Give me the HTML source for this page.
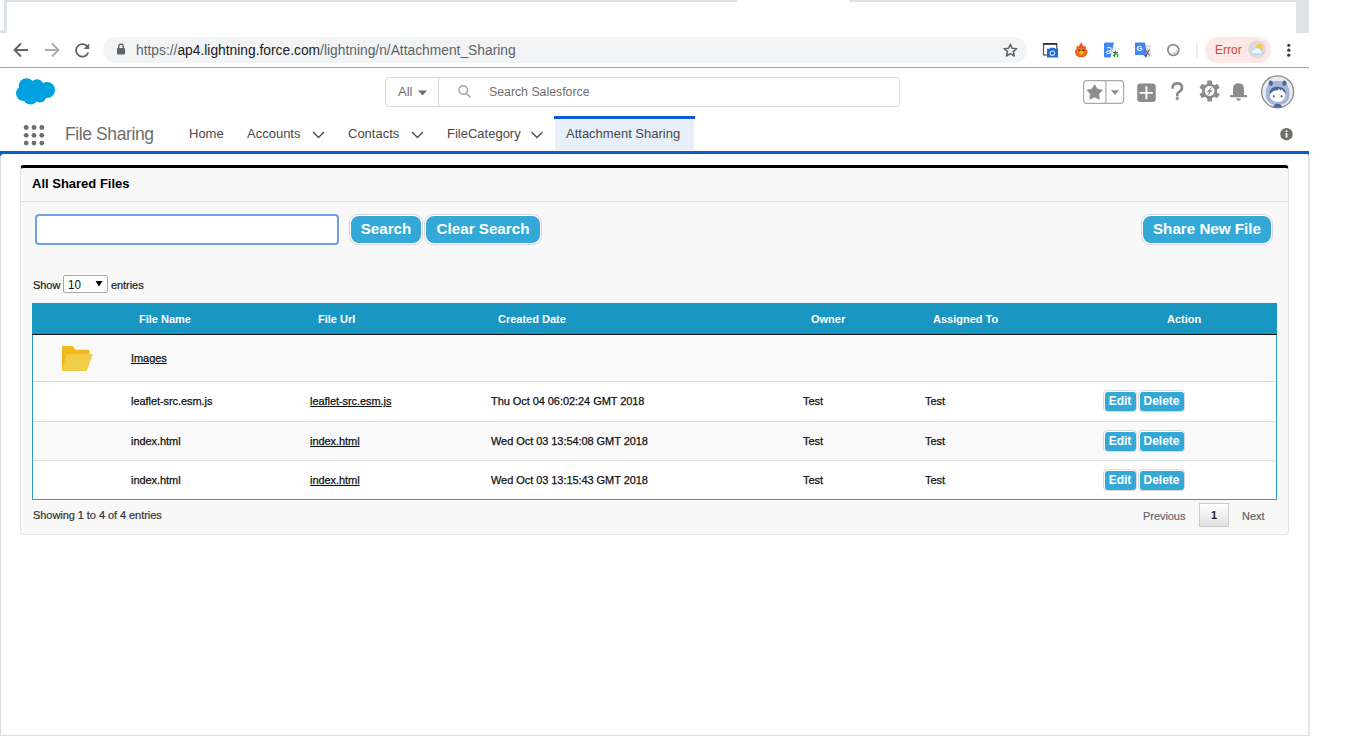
<!DOCTYPE html>
<html><head><meta charset="utf-8">
<style>
*{margin:0;padding:0;box-sizing:border-box}
html,body{width:1366px;height:736px;overflow:hidden;background:#fff;font-family:"Liberation Sans",sans-serif}
.abs{position:absolute}
svg{position:absolute;overflow:visible}
#topstrip{left:0;top:0;width:1309px;height:2px;background:#dde0e6}
#tab{left:737px;top:0;width:113px;height:2px;background:#fff;border-radius:3px 3px 0 0}
#lbox{left:0;top:0;width:7px;height:33px;border-right:3px solid #dde1e8;border-bottom:3px solid #dde1e8;background:#fff}
#rbox{left:1296px;top:0;width:13px;height:33px;background:#dee1e6}
#sep{left:0;top:67px;width:1309px;height:1px;background:#a0a0a0}
#url{left:103px;top:37px;width:924px;height:26px;border-radius:13px;background:#f1f3f4}
#urltext{left:136px;top:43px;font-size:13.8px;color:#5f6368;white-space:nowrap}
#urltext b{font-weight:normal;color:#202124}
#errpill{left:1205px;top:37px;width:66px;height:26px;border-radius:13px;background:#fce8e6}
#errtext{left:1215px;top:43px;font-size:12px;color:#d4452f}
#search{left:385px;top:77px;width:515px;height:30px;border:1px solid #dddbda;border-radius:4px;background:#fff}
#searchdiv{left:438px;top:78px;width:1px;height:28px;background:#dddbda}
.nav{font-size:13px;color:#4a4846;white-space:nowrap;top:126px}
#activetab{left:555px;top:119px;width:139px;height:31px;background:#e6effa}
#activetop{left:554px;top:116px;width:141px;height:3px;background:#0b5cd0}
#bluebar{left:0;top:151px;width:1309px;height:3px;background:#0b5cd0}
#content{left:0;top:154px;width:1310px;height:582px;border-left:1px solid #dadada;border-right:2px solid #e6e6e6;border-bottom:1px solid #dedede;background:#fff;border-top-left-radius:4px;border-top-right-radius:4px}
#card{left:20px;top:165px;width:1269px;height:370px;background:#f8f8f8;border:1px solid #e3e3e3;border-top:3px solid #000;border-radius:4px}
#cardsep{left:21px;top:201px;width:1267px;height:1px;background:#e0e0e0}
#cardtitle{left:32px;top:176px;font-size:13px;font-weight:bold;color:#000}
#inp{left:35px;top:214px;width:304px;height:31px;border:2px solid #72a0e8;border-radius:4px;background:#fff}
.btn{height:31px;border:1px solid #d8d8d8;border-radius:9px;background:#fff;padding:1px}
.btn div{width:100%;height:100%;background:#34a9d8;border-radius:8px;color:#fff;font-weight:bold;font-size:15.2px;text-align:center;line-height:25px;white-space:nowrap}
.sm{font-size:11px;color:#222;white-space:nowrap;-webkit-text-stroke:0.2px currentColor;letter-spacing:-0.06px}
#sel{left:63px;top:275px;width:45px;height:18px;border:1px solid #a9a9a9;border-radius:2px;background:#fff}
#thead{left:32px;top:303px;width:1245px;height:32px;background:#1a96c2;border-bottom:1px solid #111}
.th{font-size:11px;font-weight:bold;color:#fff;top:313px;white-space:nowrap}
#tbody{left:32px;top:335px;width:1245px;height:165px;border-left:1px solid #2a9fca;border-right:1px solid #2a9fca;border-bottom:1px solid #2a9fca;background:#fff}
.row{left:33px;width:1243px;border-top:1px solid #dddddd}
.td{font-size:11px;color:#111;white-space:nowrap;-webkit-text-stroke:0.25px #111;letter-spacing:-0.06px}
.td.u{text-decoration:underline}
.ebtn{height:22px;border:1px solid #d9d9d9;border-radius:4px;background:#fff;padding:0.5px}
.ebtn div{width:100%;height:100%;background:#34a9d8;border-radius:3px;color:#fff;font-weight:bold;font-size:12px;text-align:center;line-height:19px}
#pg1{left:1199px;top:503px;width:30px;height:24px;border:1.5px solid #cbcbcb;border-radius:0;background:linear-gradient(#fff,#e0e0e0);font-size:11px;font-weight:bold;color:#222;text-align:center;line-height:22px}
</style></head><body>
<!-- browser chrome -->
<div id="topstrip" class="abs"></div>
<div id="tab" class="abs"></div>
<div id="lbox" class="abs"></div>
<div id="rbox" class="abs"></div>
<svg style="left:0;top:0" width="30" height="68">
 <path d="M28 50H15M21 43.5L14.5 50L21 56.5" fill="none" stroke="#5f6368" stroke-width="1.8"/>
</svg>
<svg style="left:0;top:0" width="60" height="68">
 <path d="M45 50H58M52 43.5L58.5 50L52 56.5" fill="none" stroke="#a8abaf" stroke-width="1.8"/>
</svg>
<svg style="left:0;top:0" width="92" height="68">
 <path d="M88 47.5A6.3 6.3 0 1 0 88.3 52.5" fill="none" stroke="#5f6368" stroke-width="1.8"/>
 <path d="M89.2 43.5V49H83.7Z" fill="#5f6368"/>
</svg>
<div id="url" class="abs"></div>
<svg style="left:0;top:0" width="130" height="68">
 <rect x="117" y="48" width="8" height="6.5" rx="0.8" fill="#5f6368"/>
 <path d="M118.8 48.5V46.5A2.2 2.2 0 0 1 123.2 46.5V48.5" fill="none" stroke="#5f6368" stroke-width="1.4"/>
</svg>
<div id="urltext" class="abs">https://<b>ap4.lightning.force.com</b>/lightning/n/Attachment_Sharing</div>
<svg style="left:0;top:0" width="1020" height="68">
 <path d="M1010.4 44.2L1012.2 48.3L1016.7 48.7L1013.3 51.6L1014.3 56L1010.4 53.7L1006.5 56L1007.5 51.6L1004.1 48.7L1008.6 48.3Z" fill="none" stroke="#5f6368" stroke-width="1.5" stroke-linejoin="round"/>
</svg>
<!-- extension icons -->
<svg style="left:0;top:0" width="1300" height="68">
 <rect x="1043.5" y="43.8" width="13.2" height="11.2" fill="none" stroke="#555" stroke-width="1.2"/>
 <rect x="1043" y="43" width="14.2" height="1.8" fill="#333"/>
 <path d="M1047 48.8H1049.5L1050.5 47.8H1054.5L1055.5 48.8H1058V57.5H1047Z" fill="#1a6ed8"/>
 <circle cx="1052.4" cy="53.2" r="2.2" fill="none" stroke="#dfe9fb" stroke-width="1.1"/>
 <circle cx="1052.4" cy="53.2" r="0.9" fill="#1a4fb0"/>
 <path d="M1081.2 42.3L1083.5 46.5L1085.8 45.8L1085.6 48.5Q1087.8 50.5 1087.2 53Q1086.3 57.2 1081.2 57.2Q1076 57.2 1075.2 53Q1074.6 50.5 1076.7 48.5L1076.5 45.8L1078.8 46.5Z" fill="#f0501e"/>
 <ellipse cx="1081.2" cy="52" rx="4.6" ry="4.3" fill="#f07b1c"/>
 <path d="M1078.6 51.3L1083.8 51.3L1081.2 55.2Z" fill="#f6c21c"/>
 <circle cx="1079.5" cy="50.3" r="0.9" fill="#222"/><circle cx="1083.3" cy="50.3" r="0.9" fill="#222"/>
 <path d="M1105.5 42.5H1114L1110.5 57.5H1105.5Q1104 57.5 1104 56V44Q1104 42.5 1105.5 42.5Z" fill="#4285f4"/>
 <path d="M1109.5 47.5Q1111 47.5 1111 49V53.5M1111 50.8Q1106.8 50.5 1106.8 52.3Q1106.8 53.8 1108.5 53.5Q1110.5 53 1111 51.5" fill="none" stroke="#fff" stroke-width="1.1"/>
 <path d="M1107 48Q1108.2 47.3 1109.5 47.5" fill="none" stroke="#fff" stroke-width="1.1"/>
 <path d="M1113 52.5H1118M1115.5 50.5L1114.5 57M1113.3 56Q1114.3 53.5 1116.8 54Q1119 55 1117 57" fill="none" stroke="#2e8b3a" stroke-width="1.2"/>
 <rect x="1143" y="45" width="7.5" height="12" fill="#e2e2e2"/>
 <path d="M1135 42.5H1145L1147 55H1135Z" fill="#4285f4"/>
 <path d="M1144 55L1147 55L1146 58Z" fill="#2a56c6"/>
 <text x="1136.5" y="51.3" font-size="7.5" font-weight="bold" fill="#fff" font-family="Liberation Sans">G</text>
 <path d="M1145.5 49.5L1149.5 55.5M1149.5 49.5L1146 55.5" stroke="#555" stroke-width="1"/>
 <circle cx="1173.3" cy="50" r="5.4" fill="#fbfbfb" stroke="#8e8e8e" stroke-width="1.8"/>
 <path d="M1169.8 53.2A4.4 4.4 0 0 0 1177 48.5A5.5 5.5 0 0 1 1169.8 53.2Z" fill="#cfcfcf"/>
 <rect x="1196.5" y="42.5" width="1" height="15" fill="#dadce0"/>
</svg>
<div id="errpill" class="abs"></div>
<div id="errtext" class="abs">Error</div>
<svg style="left:0;top:0" width="1300" height="68">
 <circle cx="1257" cy="49.5" r="9" fill="#dcdcdc"/>
 <circle cx="1259.5" cy="47.5" r="3.5" fill="#ffc83d"/>
 <path d="M1252 54Q1250 50 1254 49.5Q1255 46.5 1258 48Q1261 47.5 1261 50.5Q1263.5 51 1262.5 54Z" fill="#f2f7ff" stroke="#8ab4f8" stroke-width="0.6"/>
 <circle cx="1288.8" cy="45.3" r="1.6" fill="#3c3c3c"/><circle cx="1288.8" cy="50.2" r="1.6" fill="#3c3c3c"/><circle cx="1288.8" cy="55.2" r="1.6" fill="#3c3c3c"/>
</svg>
<div id="sep" class="abs"></div>

<!-- salesforce header -->
<svg style="left:0;top:0" width="60" height="110">
 <g fill="#00a1e0">
  <circle cx="23.5" cy="93.5" r="7.5"/>
  <circle cx="26.5" cy="86" r="7.8"/>
  <circle cx="37" cy="85.6" r="6.4"/>
  <circle cx="47" cy="90" r="8"/>
  <circle cx="30.5" cy="97" r="7.5"/>
  <circle cx="40" cy="96" r="6.5"/>
 </g>
</svg>
<div id="search" class="abs"></div>
<div id="searchdiv" class="abs"></div>
<div class="abs" style="left:398px;top:84px;font-size:13px;color:#706e6b">All</div>
<svg style="left:0;top:0" width="440" height="110"><path d="M418 90.5H427L422.5 95.5Z" fill="#706e6b"/></svg>
<svg style="left:0;top:0" width="480" height="110">
 <circle cx="463.2" cy="90" r="4.3" fill="none" stroke="#a0a0a0" stroke-width="1.4"/>
 <path d="M466.3 93.2L470.5 97.5" stroke="#a0a0a0" stroke-width="1.5"/>
</svg>
<div class="abs" style="left:489px;top:85px;font-size:12.3px;color:#706e6b">Search Salesforce</div>
<!-- right header icons -->
<svg style="left:0;top:0" width="1300" height="112">
 <rect x="1083.6" y="80.6" width="40" height="22.8" rx="3.2" fill="#fff" stroke="#a9a9a9" stroke-width="1.2"/>
 <path d="M1105.9 80.6V103.4" stroke="#a9a9a9" stroke-width="1.2"/>
 <path d="M1094.60 84.40L1097.19 89.04L1102.40 90.07L1098.78 93.96L1099.42 99.23L1094.60 97.00L1089.78 99.23L1090.42 93.96L1086.80 90.07L1092.01 89.04Z" fill="#8c8c8c" stroke="#8c8c8c" stroke-width="0.6" stroke-linejoin="round"/>
 <path d="M1111 90.3H1119L1115 95.1Z" fill="#8c8c8c"/>
 <rect x="1137.2" y="83.5" width="18.5" height="18.5" rx="3" fill="#8c8c8c"/>
 <path d="M1146.4 86.3V99.2M1139.6 92.9H1152.9" stroke="#fff" stroke-width="1.9"/>
 <path d="M1172.6 87.6Q1172.8 83.3 1177.3 83.3Q1182 83.3 1182 87.6Q1182 90.2 1179.5 91.6Q1177.2 92.8 1177.2 95.2" fill="none" stroke="#8c8c8c" stroke-width="2.7" stroke-linecap="round"/>
 <circle cx="1177.2" cy="98.4" r="1.6" fill="#8c8c8c"/>
 <g fill="#8c8c8c">
  <circle cx="1209.6" cy="91" r="7.6"/>
  <rect x="-2.40" y="-10.40" width="4.80" height="5.40" rx="0.8" transform="translate(1209.6 91) rotate(0)"/><rect x="-2.40" y="-10.40" width="4.80" height="5.40" rx="0.8" transform="translate(1209.6 91) rotate(60)"/><rect x="-2.40" y="-10.40" width="4.80" height="5.40" rx="0.8" transform="translate(1209.6 91) rotate(120)"/><rect x="-2.40" y="-10.40" width="4.80" height="5.40" rx="0.8" transform="translate(1209.6 91) rotate(180)"/><rect x="-2.40" y="-10.40" width="4.80" height="5.40" rx="0.8" transform="translate(1209.6 91) rotate(240)"/><rect x="-2.40" y="-10.40" width="4.80" height="5.40" rx="0.8" transform="translate(1209.6 91) rotate(300)"/>
 </g>
 <circle cx="1209.6" cy="91" r="4.9" fill="#fff"/>
 <path d="M1211.3 87.3L1207.3 91.8H1209.6L1208.2 94.9L1212.2 90.3H1209.9Z" fill="#8c8c8c" stroke="#8c8c8c" stroke-width="0.5" stroke-linejoin="round"/>
 <path d="M1238.5 83.3Q1233 83.3 1233 89V95H1230V97.2H1247.1V95H1244V89Q1244 83.3 1238.5 83.3Z" fill="#8c8c8c"/>
 <path d="M1236.3 98.4H1240.9A2.3 2.3 0 0 1 1236.3 98.4Z" fill="#8c8c8c"/>
 <circle cx="1277.6" cy="91.8" r="16" fill="#e6ebf3" stroke="#8a8a8a" stroke-width="1.3"/>
 <path d="M1265.8 97Q1265.3 86 1269.5 83Q1273 80.8 1277.6 80.8Q1282.2 80.8 1285.7 83Q1289.9 86 1289.4 97Q1288 104.5 1277.6 105.5Q1267.2 104.5 1265.8 97Z" fill="#a7b6d6"/>
 <ellipse cx="1270.8" cy="83.2" rx="2.1" ry="2.7" fill="#4f679e"/>
 <ellipse cx="1284.4" cy="83.2" rx="2.1" ry="2.7" fill="#4f679e"/>
 <path d="M1273.2 107.5Q1273.6 103.8 1277.6 103.8Q1281.6 103.8 1282 107.5Z" fill="#4f679e"/>
 <ellipse cx="1277.6" cy="95" rx="7.8" ry="7" fill="#fff"/>
 <path d="M1269.6 95Q1269 86.8 1277.6 86.8Q1286.2 86.8 1285.6 95Q1285 92 1283 91L1281.5 89.2L1280.5 90.5L1278.5 88.5L1278.3 90.3Q1274 89.8 1271.5 92.5Q1270.2 93.5 1269.6 95Z" fill="#4a64a0"/>
 <ellipse cx="1273.9" cy="96.3" rx="0.9" ry="1.2" fill="#4a64a0"/><ellipse cx="1281.5" cy="96.3" rx="0.9" ry="1.2" fill="#4a64a0"/>
</svg>

<!-- nav -->
<svg style="left:0;top:0" width="50" height="150">
 <g fill="#706e6b">
  <circle cx="26.2" cy="127.5" r="2.4"/><circle cx="34" cy="127.5" r="2.4"/><circle cx="41.8" cy="127.5" r="2.4"/>
  <circle cx="26.2" cy="135.3" r="2.4"/><circle cx="34" cy="135.3" r="2.4"/><circle cx="41.8" cy="135.3" r="2.4"/>
  <circle cx="26.2" cy="143.1" r="2.4"/><circle cx="34" cy="143.1" r="2.4"/><circle cx="41.8" cy="143.1" r="2.4"/>
 </g>
</svg>
<div class="abs" style="left:65px;top:124px;font-size:17.5px;color:#706e6b;letter-spacing:-0.4px;white-space:nowrap">File Sharing</div>
<div id="activetab" class="abs"></div><div id="activetop" class="abs"></div>
<div class="abs nav" style="left:189px">Home</div>
<div class="abs nav" style="left:247px">Accounts</div>
<div class="abs nav" style="left:348px">Contacts</div>
<div class="abs nav" style="left:447px">FileCategory</div>
<div class="abs nav" style="left:566px">Attachment Sharing</div>
<svg style="left:0;top:0" width="560" height="150">
 <g fill="none" stroke="#514f4d" stroke-width="1.4">
  <path d="M313 132L318.5 137.5L324 132"/>
  <path d="M412 132L417.5 137.5L423 132"/>
  <path d="M531.5 132L537 137.5L542.5 132"/>
 </g>
</svg>
<svg style="left:0;top:0" width="1300" height="150">
 <circle cx="1286.5" cy="134.2" r="6.2" fill="#706e6b"/>
 <rect x="1285.6" y="133" width="1.8" height="4.5" fill="#fff"/>
 <circle cx="1286.5" cy="131.2" r="1" fill="#fff"/>
</svg>
<div id="bluebar" class="abs"></div>
<div class="abs" style="left:0;top:153px;width:5px;height:5px;background:#0b5cd0"></div><div class="abs" style="left:1304px;top:153px;width:5px;height:5px;background:#0b5cd0"></div>
<div id="content" class="abs"></div>

<!-- card -->
<div id="card" class="abs"></div>
<div id="cardsep" class="abs"></div>
<div id="cardtitle" class="abs">All Shared Files</div>
<div id="inp" class="abs"></div>
<div class="abs btn" style="left:349px;top:214px;width:74px"><div>Search</div></div>
<div class="abs btn" style="left:424px;top:214px;width:118px"><div>Clear Search</div></div>
<div class="abs btn" style="left:1141px;top:214px;width:132px"><div>Share New File</div></div>

<div class="abs sm" style="left:33px;top:279px">Show</div>
<div id="sel" class="abs"></div>
<div class="abs" style="left:68px;top:276.5px;font-size:13.5px;color:#111;transform:scaleX(0.86);transform-origin:0 0">10</div>
<svg style="left:0;top:0" width="110" height="300"><path d="M95.5 281H102.5L99 286.5Z" fill="#000"/></svg>
<div class="abs sm" style="left:111px;top:279px">entries</div>

<div id="thead" class="abs"></div>
<div class="abs th" style="left:139px">File Name</div>
<div class="abs th" style="left:318px">File Url</div>
<div class="abs th" style="left:498px">Created Date</div>
<div class="abs th" style="left:811px">Owner</div>
<div class="abs th" style="left:933px">Assigned To</div>
<div class="abs th" style="left:1167px">Action</div>

<div id="tbody" class="abs"></div>
<div class="abs" style="left:33px;top:335px;width:1243px;height:46px;background:#f9f9f9"></div>
<div class="abs row" style="top:381px;height:40px;background:#fff"></div>
<div class="abs row" style="top:421px;height:39px;background:#f9f9f9"></div>
<div class="abs row" style="top:460px;height:39px;background:#fff"></div>

<svg style="left:0;top:0" width="100" height="380">
 <path d="M62 347Q62 346 63 346H73L75 349.8H88.5Q89.5 349.8 89.5 350.8V355L86.7 371H62Z" fill="#f0b91c"/>
 <path d="M66.7 354.2H92.9L86.7 371H62Z" fill="#f2cd4a"/>
</svg>
<div class="abs td u" style="left:131px;top:352px">Images</div>

<div class="abs td" style="left:131px;top:395px">leaflet-src.esm.js</div>
<div class="abs td u" style="left:310px;top:395px">leaflet-src.esm.js</div>
<div class="abs td" style="left:491px;top:395px">Thu Oct 04 06:02:24 GMT 2018</div>
<div class="abs td" style="left:803px;top:395px">Test</div>
<div class="abs td" style="left:925px;top:395px">Test</div>
<div class="abs ebtn" style="left:1103px;top:390px;width:34px"><div>Edit</div></div>
<div class="abs ebtn" style="left:1138px;top:390px;width:47px"><div>Delete</div></div>

<div class="abs td" style="left:131px;top:435px">index.html</div>
<div class="abs td u" style="left:310px;top:435px">index.html</div>
<div class="abs td" style="left:491px;top:435px">Wed Oct 03 13:54:08 GMT 2018</div>
<div class="abs td" style="left:803px;top:435px">Test</div>
<div class="abs td" style="left:925px;top:435px">Test</div>
<div class="abs ebtn" style="left:1103px;top:430px;width:34px"><div>Edit</div></div>
<div class="abs ebtn" style="left:1138px;top:430px;width:47px"><div>Delete</div></div>

<div class="abs td" style="left:131px;top:474px">index.html</div>
<div class="abs td u" style="left:310px;top:474px">index.html</div>
<div class="abs td" style="left:491px;top:474px">Wed Oct 03 13:15:43 GMT 2018</div>
<div class="abs td" style="left:803px;top:474px">Test</div>
<div class="abs td" style="left:925px;top:474px">Test</div>
<div class="abs ebtn" style="left:1103px;top:469px;width:34px"><div>Edit</div></div>
<div class="abs ebtn" style="left:1138px;top:469px;width:47px"><div>Delete</div></div>

<div class="abs sm" style="left:33px;top:509px;color:#333">Showing 1 to 4 of 4 entries</div>
<div class="abs sm" style="left:1143px;top:510px;color:#666">Previous</div>
<div id="pg1" class="abs">1</div>
<div class="abs sm" style="left:1242px;top:510px;color:#666">Next</div>
</body></html>
